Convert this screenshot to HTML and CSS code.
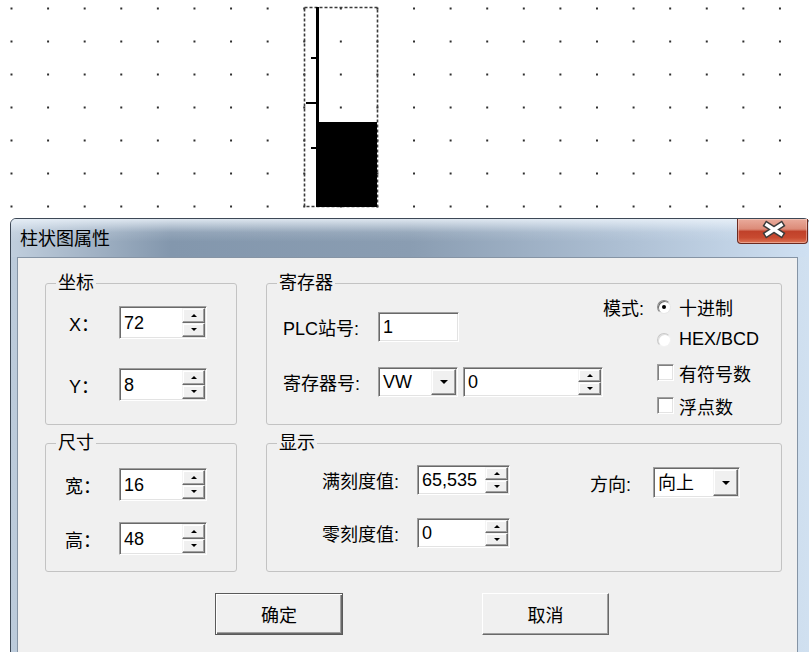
FILE: index.html
```html
<!DOCTYPE html>
<html lang="zh-CN">
<head>
  <meta charset="UTF-8">
  <title>柱状图属性</title>
  <link rel="stylesheet" href="styles.css">
</head>
<body>
  <div class="canvas">
    <!-- bar graph object on the design canvas -->
    <svg class="bargraph" width="77" height="203" viewBox="0 0 77 203">
      <rect x="1.5" y="1.5" width="73" height="199" fill="none" stroke="#3a3a3a" stroke-width="1.6" stroke-dasharray="3 2"/>
      <rect x="13" y="116" width="61" height="85" fill="#000"/>
      <rect x="13" y="1" width="3" height="200" fill="#000"/>
      <rect x="8" y="51" width="5" height="2" fill="#000"/>
      <rect x="3" y="96" width="10" height="2" fill="#000"/>
      <rect x="8" y="141" width="5" height="2" fill="#000"/>
    </svg>

    <div class="window">
      <div class="titlebar">
        <span class="title">柱状图属性</span>
        <span class="close">
          <svg width="69" height="23" viewBox="0 0 69 23">
            <path d="M29 6 L43 15 M43 6 L29 15" stroke="#3c3c3c" stroke-width="6.5" stroke-linecap="square" fill="none"/>
            <path d="M29 6 L43 15 M43 6 L29 15" stroke="#fff" stroke-width="3.5" stroke-linecap="square" fill="none"/>
          </svg>
        </span>
      </div>

      <div class="client">
        <div class="groups">
          <fieldset class="group">
            <legend>坐标</legend>
            <div class="field-list coord-list">
              <div class="field">
                <span class="lbl lbl-coord">X：</span>
                <div class="spin spin-88">
                  <span class="val">72</span>
                  <span class="arrows"><span class="arrow up"></span><span class="arrow down"></span></span>
                </div>
              </div>
              <div class="field">
                <span class="lbl lbl-coord">Y：</span>
                <div class="spin spin-88">
                  <span class="val">8</span>
                  <span class="arrows"><span class="arrow up"></span><span class="arrow down"></span></span>
                </div>
              </div>
            </div>
          </fieldset>

          <fieldset class="group">
            <legend>寄存器</legend>
            <div class="reg-body">
              <div class="field-list reg-left">
                <div class="field">
                  <span class="lbl lbl-95">PLC站号:</span>
                  <div class="edit edit-plc"><span class="val">1</span></div>
                </div>
                <div class="field">
                  <span class="lbl lbl-95">寄存器号:</span>
                  <div class="combo combo-80">
                    <span class="val">VW</span>
                    <span class="drop"></span>
                  </div>
                  <div class="spin spin-140">
                    <span class="val">0</span>
                    <span class="arrows"><span class="arrow up"></span><span class="arrow down"></span></span>
                  </div>
                </div>
              </div>
              <div class="mode">
                <span class="mode-lbl">模式:</span>
                <label class="opt"><span class="radio checked"></span>十进制</label>
                <label class="opt"><span class="radio"></span>HEX/BCD</label>
                <label class="opt"><span class="check"></span>有符号数</label>
                <label class="opt"><span class="check"></span>浮点数</label>
              </div>
            </div>
          </fieldset>

          <fieldset class="group">
            <legend>尺寸</legend>
            <div class="field-list size-list">
              <div class="field">
                <span class="lbl lbl-size">宽：</span>
                <div class="spin spin-88">
                  <span class="val">16</span>
                  <span class="arrows"><span class="arrow up"></span><span class="arrow down"></span></span>
                </div>
              </div>
              <div class="field">
                <span class="lbl lbl-size">高：</span>
                <div class="spin spin-88">
                  <span class="val">48</span>
                  <span class="arrows"><span class="arrow up"></span><span class="arrow down"></span></span>
                </div>
              </div>
            </div>
          </fieldset>

          <fieldset class="group">
            <legend>显示</legend>
            <div class="disp-body">
              <div class="field-list disp-left">
                <div class="field">
                  <span class="lbl lbl-95">满刻度值:</span>
                  <div class="spin spin-93">
                    <span class="val">65,535</span>
                    <span class="arrows"><span class="arrow up"></span><span class="arrow down"></span></span>
                  </div>
                </div>
                <div class="field">
                  <span class="lbl lbl-95">零刻度值:</span>
                  <div class="spin spin-93">
                    <span class="val">0</span>
                    <span class="arrows"><span class="arrow up"></span><span class="arrow down"></span></span>
                  </div>
                </div>
              </div>
              <div class="field disp-right">
                <span class="lbl lbl-dir">方向:</span>
                <div class="combo combo-87">
                  <span class="val">向上</span>
                  <span class="drop"></span>
                </div>
              </div>
            </div>
          </fieldset>
        </div>

        <div class="actions">
          <button class="btn btn-default">确定</button>
          <button class="btn btn-cancel">取消</button>
        </div>
      </div>
    </div>
  </div>
</body>
</html>
```

FILE: styles.css
```css
* {
  box-sizing: border-box;
}
body {
  margin: 0;
  font-family: "Liberation Sans", "Noto Sans CJK SC", sans-serif;
  font-size: 18px;
  color: #000;
}
.canvas {
  position: relative;
  width: 809px;
  height: 652px;
  overflow: hidden;
  background-color: #fff;
  /* 2px grid dots, one per tile */
  background-image: conic-gradient(from 180deg at 2px 2px, transparent 25%, #2e2e2e 0 50%, transparent 0);
  background-size: 36.6px 33px;
  background-position: 10.5px 7.5px;
}
.bargraph {
  position: absolute;
  left: 303px;
  top: 6px;
}

/* dialog window */
.window {
  position: absolute;
  left: 10px;
  top: 218px;
  width: 800px;
  height: 440px;
  display: flex;
  flex-direction: column;
  border: 1px solid #3d4856;
  border-radius: 6px 6px 0 0;
  background: linear-gradient(to right, #bccbdb, #a9bacb 40%, #c2d2e3 80%, #d0e0f0);
}
.titlebar {
  height: 38px;
  display: flex;
  align-items: center;
  padding-left: 9px;
  border-radius: 5px 5px 0 0;
  background:
    linear-gradient(to bottom, rgba(236,243,250,0.85) 0%, rgba(236,243,250,0.15) 35%, rgba(236,243,250,0) 60%),
    linear-gradient(to right, #c0cedd 0%, #8397ad 20%, #8a9db2 50%, #afc1d5 78%, #cfe0f2 100%);
}
.title {
  line-height: 20px;
  margin-top: 1px;
}
.close {
  align-self: flex-start;
  margin-left: auto;
  margin-right: 1px;
  width: 71px;
  height: 25px;
  border: 1px solid #6b2a20;
  border-top: none;
  border-radius: 0 0 4px 4px;
  background: linear-gradient(to bottom, #e9ab9c 0%, #dc8b78 42%, #c0412a 52%, #c84a30 78%, #dd7556 100%);
  box-shadow: inset 0 0 0 1px rgba(255, 220, 210, 0.45);
}
.close svg {
  display: block;
}
.client {
  flex: 1;
  margin: 0 11px 0 6px;
  padding: 15px 0 0 27px;
  border: 1px solid #8594a5;
  background: #f0f0f0;
}

/* group boxes */
.groups {
  display: grid;
  grid-template-columns: 192px 516px;
  grid-template-rows: 152px 139px;
  column-gap: 29px;
  row-gap: 8px;
}
.group {
  margin: 0;
  padding: 0;
  min-width: 0;
  border: 1px solid #c3c3c3;
  border-radius: 3px;
}
.group legend {
  margin-left: 10px;
  padding: 0 2px;
  line-height: 20px;
}
.field-list {
  display: flex;
  flex-direction: column;
}
.field {
  display: flex;
  align-items: center;
}
.lbl {
  flex: none;
  white-space: nowrap;
}
.coord-list {
  padding: 13px 0 0 23px;
  gap: 29px;
}
.lbl-coord {
  width: 50px;
}
.size-list {
  padding: 15px 0 0 19px;
  gap: 21px;
}
.lbl-size {
  width: 54px;
}
.lbl-95 {
  width: 95px;
}
.lbl-dir {
  width: 63px;
}

/* register group */
.reg-body {
  display: flex;
}
.reg-left {
  width: 336px;
  padding: 19px 0 0 16px;
  gap: 25px;
}
.reg-left .combo {
  margin-right: 5px;
}
.mode {
  display: grid;
  grid-template-columns: 54px auto;
  grid-auto-rows: 33px;
  align-items: center;
  margin-top: -3px;
}
.mode-lbl {
  grid-column: 1;
  grid-row: 1;
}
.opt {
  grid-column: 2;
  display: flex;
  align-items: center;
  gap: 8px;
  white-space: nowrap;
}

/* display group */
.disp-body {
  display: flex;
  padding: 12px 0 0 55px;
}
.disp-left {
  gap: 23px;
}
.disp-right {
  align-self: flex-start;
  margin: 2px 0 0 80px;
}

/* sunken controls */
.edit,
.spin,
.combo {
  display: flex;
  background: #fff;
  border: 1px solid;
  border-color: #a0a0a0 #fff #fff #a0a0a0;
  box-shadow: inset 1px 1px 0 #696969, inset -1px -1px 0 #e3e3e3;
  padding: 1px;
}
.val {
  flex: 1;
  align-self: center;
  padding-left: 3px;
  line-height: 20px;
  white-space: nowrap;
  overflow: hidden;
}
.edit-plc {
  width: 81px;
  height: 30px;
}
.spin-88 {
  width: 88px;
  height: 33px;
}
.spin-93 {
  width: 93px;
  height: 30px;
}
.spin-140 {
  width: 140px;
  height: 30px;
}
.combo-80 {
  width: 80px;
  height: 30px;
}
.combo-87 {
  width: 87px;
  height: 31px;
}
.arrows {
  width: 23px;
  display: flex;
  flex-direction: column;
}
.arrow,
.drop {
  display: flex;
  align-items: center;
  justify-content: center;
  background: #f0f0f0;
  border: 1px solid;
  border-color: #f4f4f4 #696969 #696969 #f4f4f4;
  box-shadow: inset -1px -1px 0 #a0a0a0, inset 1px 1px 0 #fff;
}
.arrow {
  flex: 1;
}
.arrow::before,
.drop::before {
  content: "";
  width: 0;
  height: 0;
  border-left: 3px solid transparent;
  border-right: 3px solid transparent;
}
.arrow.up::before {
  border-bottom: 3px solid #000;
}
.arrow.down::before {
  border-top: 3px solid #000;
}
.drop {
  width: 25px;
}
.drop::before {
  border-left-width: 4px;
  border-right-width: 4px;
  border-top: 4px solid #000;
}

/* radio and check boxes */
.radio {
  position: relative;
  width: 14px;
  height: 14px;
  border-radius: 50%;
  background: #fff;
  border: 1px solid;
  border-color: #c8c8c8 #f2f2f2 #f2f2f2 #c8c8c8;
  box-shadow: inset 1px 1px 0 #dedede;
}
.radio.checked {
  border-color: #8a8a8a #e8e8e8 #e8e8e8 #8a8a8a;
  box-shadow: inset 1px 1px 0 #6a6a6a;
}
.radio.checked::after {
  content: "";
  position: absolute;
  left: 4px;
  top: 4px;
  width: 4px;
  height: 4px;
  border-radius: 50%;
  background: #000;
}
.check {
  width: 17px;
  height: 17px;
  margin-right: -3px;
  background: #fff;
  border: 1px solid;
  border-color: #a0a0a0 #fff #fff #a0a0a0;
  box-shadow: inset 1px 1px 0 #808080, inset -1px -1px 0 #e3e3e3;
}

/* dialog buttons */
.actions {
  display: flex;
  gap: 139px;
  padding-left: 170px;
  margin-top: 21px;
}
.btn {
  height: 42px;
  padding: 0;
  font: inherit;
  color: #000;
  background: #f0f0f0;
}
.btn-default {
  width: 128px;
  border: 1px solid #5a5a5a;
  box-shadow: inset 1px 1px 0 #fff, inset -1px -1px 0 #696969, inset -2px -2px 0 #a0a0a0;
}
.btn-cancel {
  width: 127px;
  border: 1px solid;
  border-color: #fff #696969 #696969 #fff;
  box-shadow: inset -1px -1px 0 #a0a0a0;
}
```
